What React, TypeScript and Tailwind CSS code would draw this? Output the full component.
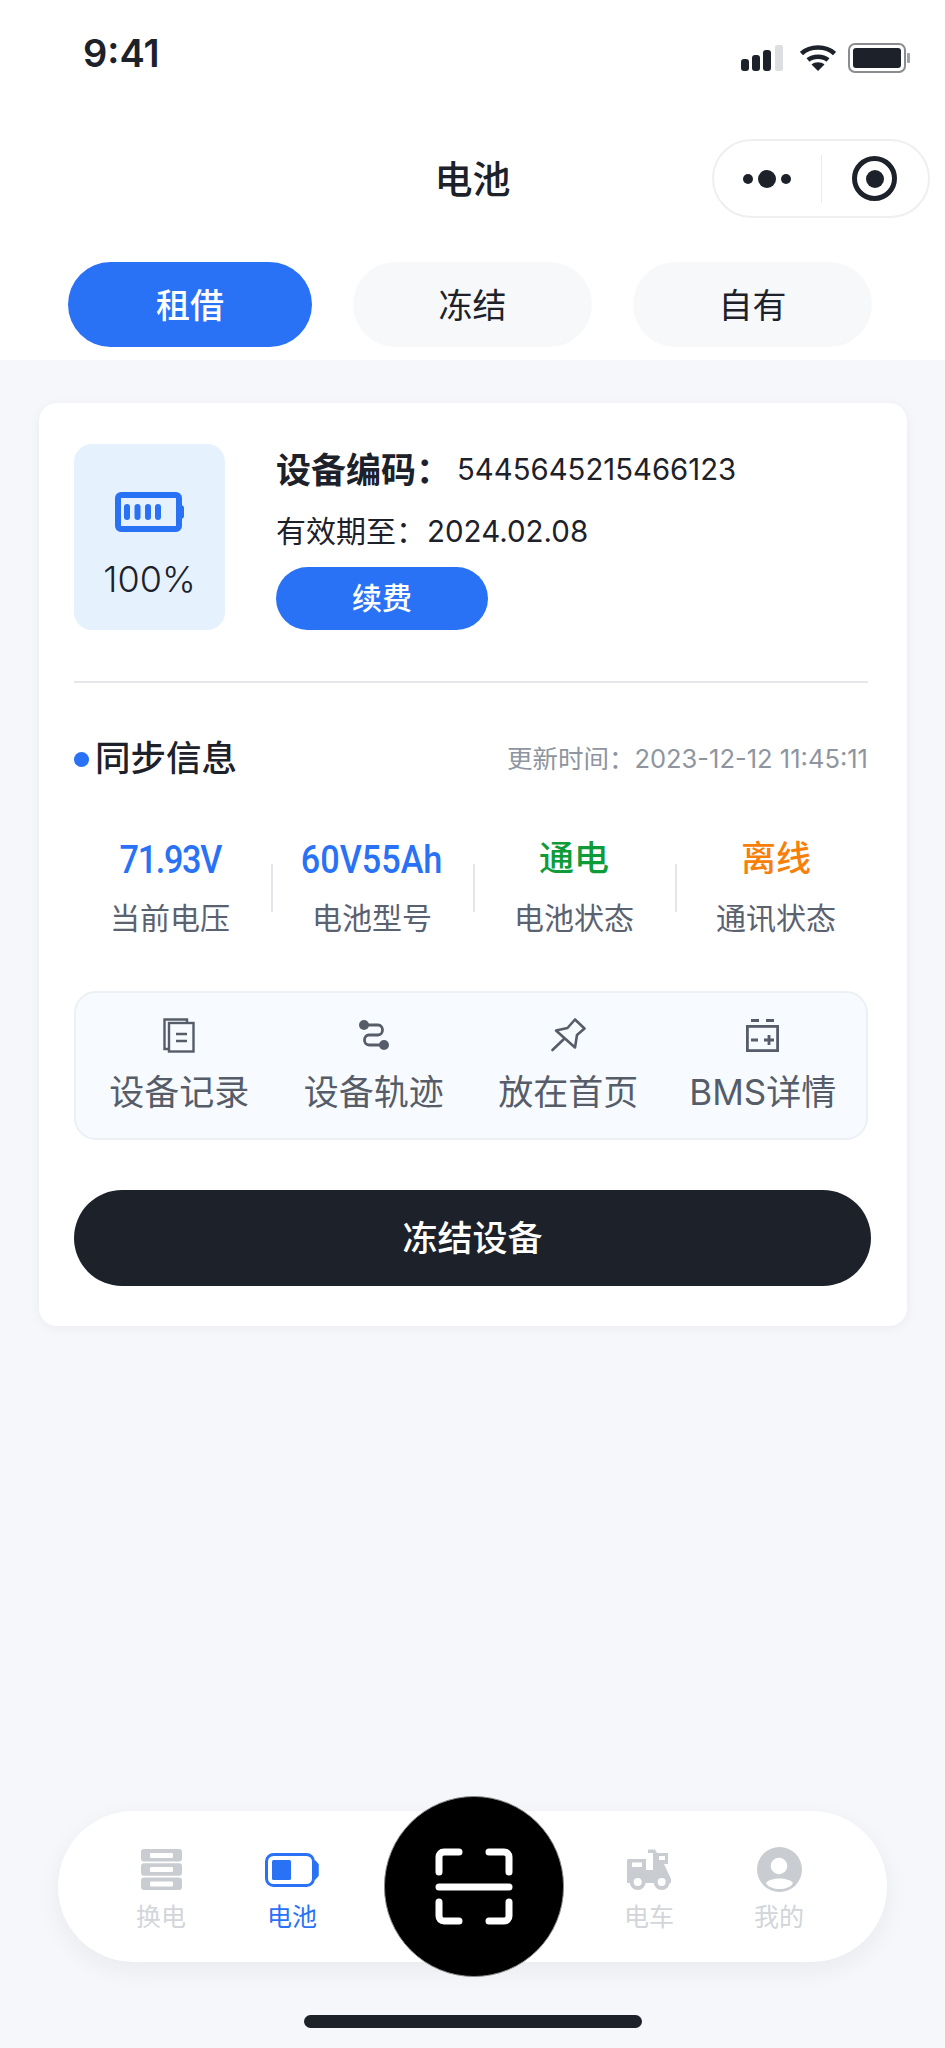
import type { ReactNode } from "react"

const sans = "font-['Inter','Noto_Sans_CJK_SC',sans-serif]"

const stats = [
  { value: "71.93V", label: "当前电压", color: "scale-x-90 text-[38px] tracking-[-1.5px] text-[#2972f6]" },
  { value: "60V55Ah", label: "电池型号", color: "scale-x-90 text-[38px] text-[#2972f6]" },
  { value: "通电", label: "电池状态", color: "text-[35px] text-[#0d9c38]" },
  { value: "离线", label: "通讯状态", color: "text-[35px] text-[#f7800a]" },
]

function DocsIcon() {
  return (
    <svg width="32" height="35" viewBox="0 0 32 35" fill="none" stroke="#565d69" strokeWidth="2.4">
      <path d="M6 31H1.5V1.5H24V5" />
      <rect x="6" y="5" width="24.5" height="28.5" />
      <path d="M13 16H24M13 23H24" />
    </svg>
  )
}

function RouteIcon() {
  return (
    <svg width="30" height="30" viewBox="0 0 30 30" fill="none" stroke="#565d69" strokeWidth="2.8">
      <path d="M5 5H19C25 5 25 15 19 15H10C4 15 4 25 10 25H25" />
      <circle cx="5" cy="5" r="5" fill="#565d69" stroke="none" />
      <circle cx="25" cy="25" r="5" fill="#565d69" stroke="none" />
    </svg>
  )
}

function PinIcon() {
  return (
    <svg width="35" height="34" viewBox="0 0 35 34" fill="none" stroke="#565d69" strokeWidth="2.6" strokeLinejoin="round">
      <path d="M1.5 32L13 21" strokeLinecap="round" />
      <path d="M24 1.5L33.5 10.5L26 17L24 29.5L5 12.5L16.5 10Z" />
    </svg>
  )
}

function BatteryBoxIcon() {
  return (
    <svg width="33" height="33" viewBox="0 0 33 33" fill="none" stroke="#565d69" strokeWidth="2.8">
      <path d="M5 1.5H13M20 1.5H28" />
      <rect x="1.4" y="7.4" width="30.2" height="24.2" />
      <path d="M5 21H12M18 21H28M23 16V26" />
    </svg>
  )
}

const actions: { label: string; icon: ReactNode }[] = [
  { label: "设备记录", icon: <DocsIcon /> },
  { label: "设备轨迹", icon: <RouteIcon /> },
  { label: "放在首页", icon: <PinIcon /> },
  { label: "BMS详情", icon: <BatteryBoxIcon /> },
]

function StackIcon() {
  return (
    <svg width="41" height="41" viewBox="0 0 41 41">
      <rect width="41" height="12.5" rx="3" fill="#c9ccd1" />
      <rect y="14.3" width="41" height="12.5" rx="3" fill="#c9ccd1" />
      <rect y="28.6" width="41" height="12.4" rx="3" fill="#c9ccd1" />
      <rect x="9" y="4" width="23" height="5" rx="1" fill="#fff" />
      <rect x="9" y="18" width="23" height="5" rx="1" fill="#fff" />
      <rect x="9" y="32.5" width="23" height="5" rx="1" fill="#fff" />
    </svg>
  )
}

function NavBatteryIcon() {
  return (
    <svg width="54" height="34" viewBox="0 0 54 34" fill="none">
      <rect x="1.5" y="1.5" width="47" height="31" rx="7" stroke="#2972f6" strokeWidth="3" />
      <rect x="7" y="7" width="19" height="20" rx="1.5" fill="#2972f6" />
      <path d="M50 8L53 11.5V22.5L50 26Z" fill="#2972f6" stroke="#2972f6" strokeWidth="1.5" strokeLinejoin="round" />
    </svg>
  )
}

function ScooterIcon() {
  return (
    <svg width="44" height="41" viewBox="0 0 44 41">
      <path d="M1 10H19V21H26V4H21V0.5H28L30 4H41V15H37L44 30V34H0V11Z" fill="#c9ccd1" />
      <rect x="5" y="13.5" width="10" height="4.5" fill="#fff" />
      <rect x="32" y="7" width="6" height="4" fill="#fff" />
      <circle cx="10.7" cy="33" r="8" fill="#c9ccd1" />
      <circle cx="10.7" cy="33" r="4" fill="#fff" />
      <circle cx="34.7" cy="33" r="8" fill="#c9ccd1" />
      <circle cx="34.7" cy="33" r="4" fill="#fff" />
    </svg>
  )
}

function UserIcon() {
  return (
    <svg width="45" height="45" viewBox="0 0 45 45">
      <circle cx="22.5" cy="22.5" r="22.5" fill="#c9ccd1" />
      <circle cx="22" cy="19" r="8.3" fill="#fff" />
      <path d="M9 36C13 30 32 30 36 36C32 44 13 44 9 36Z" fill="#fff" />
    </svg>
  )
}

function NavItem({ icon, label, active }: { icon: ReactNode; label: string; active?: boolean }) {
  return (
    <div className="flex w-[60px] flex-col items-center">
      <div className="flex h-[45px] items-center">{icon}</div>
      <span className={`mt-[7px] text-[25px] leading-[36px] ${active ? "text-[#2972f6]" : "text-[#d2d5d9]"}`}>{label}</span>
    </div>
  )
}

export default function App() {
  return (
    <div className={`flex h-[2048px] w-[945px] flex-col overflow-hidden bg-[#f5f7fa] text-[#1d2129] ${sans}`}>
      <div className="h-[360px] shrink-0 bg-white">
        {/* status bar */}
        <div className="flex h-[139px] items-start justify-between pr-[35px] pl-[83px]">
          <span className="mt-[30px] text-[38px] leading-[46px] font-semibold">9:41</span>
          <div className="mt-[43px] flex items-center">
            <svg width="42" height="26" viewBox="0 0 42 26">
              <rect x="0" y="14" width="8" height="12" rx="3" fill="#1d2129" />
              <rect x="11" y="10" width="8" height="16" rx="3" fill="#1d2129" />
              <rect x="22" y="5" width="8" height="21" rx="3" fill="#1d2129" />
              <rect x="34" y="0" width="8" height="26" rx="2" fill="#dcdee1" />
            </svg>
            <svg className="mr-[12px] ml-[17px]" width="36" height="26" viewBox="0 0 36 26" fill="none" stroke="#1d2129" strokeWidth="4.5">
              <path d="M1.5 8.5C10 0.5 26 0.5 34.5 8.5" />
              <path d="M8 15C13 10.5 23 10.5 28 15" />
              <path d="M18 26L11.5 19.5C15 16.5 21 16.5 24.5 19.5Z" fill="#1d2129" stroke="none" />
            </svg>
            <svg width="62" height="30" viewBox="0 0 62 30">
              <rect x="1" y="1" width="56" height="28" rx="6" fill="none" stroke="#8a8c90" strokeWidth="2" />
              <rect x="5" y="5" width="48" height="20" rx="3" fill="#1d2129" />
              <rect x="59" y="10" width="3" height="10" rx="1" fill="#a0a2a6" />
            </svg>
          </div>
        </div>

        {/* title bar */}
        <div className="grid h-[79px] grid-cols-[1fr_auto_1fr] items-center px-[15px]">
          <div />
          <h1 className="text-[38px] leading-none font-medium">电池</h1>
          <div className="flex h-[79px] w-[218px] items-center justify-self-end rounded-full border-2 border-[#eeeff1]">
            <div className="flex flex-1 items-center justify-center gap-[5px]">
              <span className="h-[10px] w-[10px] rounded-full bg-[#1d2129]" />
              <span className="h-[18px] w-[18px] rounded-full bg-[#1d2129]" />
              <span className="h-[10px] w-[10px] rounded-full bg-[#1d2129]" />
            </div>
            <div className="h-[48px] w-px bg-[#e8e9eb]" />
            <div className="flex flex-1 items-center justify-center">
              <div className="flex h-[45px] w-[45px] items-center justify-center rounded-full border-[5px] border-[#1d2129]">
                <span className="h-[18px] w-[18px] rounded-full bg-[#1d2129]" />
              </div>
            </div>
          </div>
        </div>

        {/* tabs */}
        <div className="mt-[44px] flex gap-[41px] pl-[68px]">
          <button className="h-[85px] w-[244px] rounded-full bg-[#2972f6] pt-[2px] text-[34px] font-medium text-white">租借</button>
          <button className="h-[85px] w-[239px] rounded-full bg-[#f7f8fa] pt-[2px] text-[34px]">冻结</button>
          <button className="h-[85px] w-[239px] rounded-full bg-[#f7f8fa] pt-[2px] text-[34px]">自有</button>
        </div>
      </div>

      {/* device card */}
      <div className="mt-[43px] mr-[38px] ml-[39px] h-[923px] rounded-[18px] bg-white pt-[41px] pr-[39px] pl-[35px] shadow-[0_2px_12px_rgba(30,40,60,0.05)]">
        <div className="flex">
          <div className="flex h-[186px] w-[151px] flex-col items-center rounded-[18px] bg-[#e6f1fe] pt-[48px]">
            <svg width="69" height="40" viewBox="0 0 69 40" fill="none">
              <rect x="3" y="3" width="61" height="34" rx="3" stroke="#2972f6" strokeWidth="6" />
              <path d="M66 12L69 15V25L66 28Z" fill="#2972f6" />
              <rect x="9" y="12" width="6" height="16" rx="3" fill="#2972f6" />
              <rect x="19.5" y="12" width="6" height="16" rx="3" fill="#2972f6" />
              <rect x="30" y="12" width="6" height="16" rx="3" fill="#2972f6" />
              <rect x="40" y="12" width="6" height="16" rx="3" fill="#2972f6" />
            </svg>
            <span className="mt-[25px] text-[36px] leading-[44px] font-light">100%</span>
          </div>
          <div className="ml-[51px] flex flex-col">
            <div className="flex h-[52px] items-center">
              <span className="text-[35px] font-semibold">设备编码：</span>
              <span className="ml-[6px] text-[29.3px]">5445645215466123</span>
            </div>
            <div className="mt-[9px] flex h-[52px] items-center">
              <span className="text-[30px]">有效期至：</span>
              <span className="ml-[1px] text-[29.5px]">2024.02.08</span>
            </div>
            <button className="mt-[10px] h-[63px] w-[212px] rounded-full bg-[#2972f6] text-[30px] font-medium text-white">续费</button>
          </div>
        </div>

        <div className="mt-[51px] h-[2px] bg-[#e5e7ea]" />

        {/* sync info */}
        <div className="mt-[50px] flex items-center justify-between">
          <div className="flex items-center">
            <span className="h-[15px] w-[15px] rounded-full bg-[#2972f6]" />
            <span className="ml-[6px] text-[35.5px] leading-[52px] font-medium">同步信息</span>
          </div>
          <span className="text-[25.5px] text-[#8e959f]">更新时间：2023-12-12 11:45:11</span>
        </div>

        <div className="mt-[51px] mr-[-9px] ml-[-5px] grid grid-cols-4">
          {stats.map((s, i) => (
            <div key={s.label} className={`flex flex-col items-center ${i > 0 ? "relative" : ""}`}>
              {i > 0 && <span className="absolute top-[28px] left-0 h-[48px] w-[2px] bg-[#e3e5e8]" />}
              <span className={`font-['Roboto','Noto_Sans_CJK_SC',sans-serif] leading-[48px] font-medium ${s.color}`}>{s.value}</span>
              <span className="mt-[12px] text-[30px] leading-[44px] text-[#5a6270]">{s.label}</span>
            </div>
          ))}
        </div>

        {/* actions */}
        <div className="mt-[51px] grid h-[149px] grid-cols-4 rounded-[22px] border-2 border-[#edf0f3] bg-[#f7fbff] px-[6px] pt-[24px]">
          {actions.map((a) => (
            <div key={a.label} className="flex flex-col items-center">
              <div className="flex h-[36px] items-center">{a.icon}</div>
              <span className="mt-[16px] text-[35px] leading-[46px] text-[#565d69]">{a.label}</span>
            </div>
          ))}
        </div>

        <button className="mt-[50px] h-[96px] w-[797px] rounded-full bg-[#1d2129] text-[35px] font-medium text-white">冻结设备</button>
      </div>

      {/* bottom nav */}
      <div className="mt-auto mb-[20px] flex flex-col items-center">
        <div className="relative flex h-[151px] w-[829px] items-start rounded-full bg-white pt-[36px] pl-[73px] shadow-[0_8px_24px_rgba(30,40,60,0.06)]">
          <NavItem icon={<StackIcon />} label="换电" />
          <div className="ml-[71px]">
            <NavItem icon={<NavBatteryIcon />} label="电池" active />
          </div>
          <div className="ml-[297px]">
            <NavItem icon={<ScooterIcon />} label="电车" />
          </div>
          <div className="ml-[70px]">
            <NavItem icon={<UserIcon />} label="我的" />
          </div>
          <div className="absolute top-[-15px] left-[326px] flex h-[181px] w-[180px] items-center justify-center rounded-full border border-[#8a8a8a] bg-black">
            <svg width="78" height="77" viewBox="0 0 78 77" fill="none" stroke="#fff" strokeWidth="7" strokeLinecap="round" strokeLinejoin="round">
              <path d="M24 4H9C6 4 4 6 4 9V24" />
              <path d="M54 4H69C72 4 74 6 74 9V24" />
              <path d="M4 39H74" />
              <path d="M4 54V68C4 71 6 73 9 73H24" />
              <path d="M74 54V68C74 71 72 73 69 73H54" />
            </svg>
          </div>
        </div>
        <div className="mt-[53px] h-[13px] w-[338px] rounded-full bg-[#1d2129]" />
      </div>
    </div>
  )
}
